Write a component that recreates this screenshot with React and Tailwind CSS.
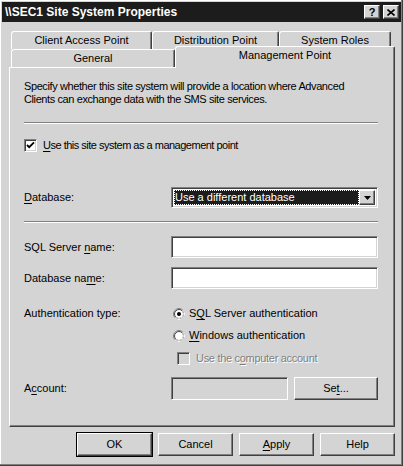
import React from 'react';

const raised =
  'border border-t-white border-l-white border-r-[#404040] border-b-[#404040] shadow-[inset_-1px_-1px_0_#808080]';
const sunken =
  'border border-t-[#808080] border-l-[#808080] border-r-white border-b-white shadow-[inset_1px_1px_0_#404040,inset_-1px_-1px_0_#d4d4d4]';

const U = ({ children }) => <span className="underline underline-offset-2">{children}</span>;

const Separator = ({ className = '' }) => (
  <div className={`h-[2px] border-t border-t-[#808080] border-b border-b-white ${className}`} />
);

const Checkbox = ({ checked, disabled }) => (
  <div className={`w-[13px] h-[13px] shrink-0 flex items-center justify-center ${sunken} ${disabled ? 'bg-[#d4d4d4]' : 'bg-white'}`}>
    {checked && (
      <svg width="9" height="9" viewBox="0 0 9 9">
        <path d="M1 4 L3.2 6.2 L8 1.4" fill="none" stroke="#000" strokeWidth="1.8" />
      </svg>
    )}
  </div>
);

const Radio = ({ checked }) => (
  <svg width="12" height="12" viewBox="0 0 12 12" className="shrink-0">
    <circle cx="6" cy="6" r="5.5" fill="#fff" stroke="#808080" />
    <path d="M9.89 2.11 A5.5 5.5 0 0 1 2.11 9.89" fill="none" stroke="#fff" />
    <circle cx="6" cy="6" r="4.5" fill="none" stroke="#404040" />
    <path d="M9.18 2.82 A4.5 4.5 0 0 1 2.82 9.18" fill="none" stroke="#d4d4d4" />
    {checked && <circle cx="6" cy="6" r="2" fill="#000" />}
  </svg>
);

const Tab = ({ w, children, selected }) => (
  <div
    className={`${w} flex items-center justify-center border-t border-l border-t-white border-l-white border-r border-r-[#404040] shadow-[inset_-1px_0_0_#808080] rounded-tl-[3px] rounded-tr-[2px] bg-[#d4d4d4] ${
      selected ? 'relative z-10 -mt-[3px] h-[22px] pb-[4px]' : 'h-[18px]'
    }`}
  >
    {children}
  </div>
);

const Button = ({ children, def, className = 'w-[75px] h-[23px]' }) => (
  <div className={`${className} ${def ? 'outline outline-1 outline-black' : ''} flex`}>
    <div className={`flex-1 flex items-center justify-center ${raised}`}>{children}</div>
  </div>
);

const Row = ({ label, children, className = '' }) => (
  <div className={`flex items-center ${className}`}>
    <div className="w-[147px] shrink-0">{label}</div>
    {children}
  </div>
);

export default function App() {
  return (
    <div
      className="w-[403px] h-[466px] bg-[#d4d4d4] p-[2px] flex flex-col text-[11px] leading-[13px] text-black shadow-[inset_-1px_-1px_0_#404040,inset_-2px_-2px_0_#808080,inset_1px_1px_0_#fff]"
      style={{ fontFamily: '"Liberation Sans", Arial, sans-serif' }}
    >
      {/* Title bar */}
      <div className="h-[20px] bg-[#1c1c1c] flex items-center pl-[3px] pr-[2px]">
        <span className="flex-1 text-white font-bold text-[12px]">\\SEC1 Site System Properties</span>
        <div className="flex gap-[3px]">
          <div className={`w-[16px] h-[14px] bg-[#d4d4d4] flex items-center justify-center font-bold text-[11px] ${raised}`}>?</div>
          <div className={`w-[16px] h-[14px] bg-[#d4d4d4] flex items-center justify-center ${raised}`}>
            <svg width="8" height="7" viewBox="0 0 8 7">
              <path d="M0.5 0.5 L7.5 6.5 M7.5 0.5 L0.5 6.5" stroke="#000" strokeWidth="1.6" />
            </svg>
          </div>
        </div>
      </div>

      {/* Tabs */}
      <div className="mt-[9px] ml-[9px] flex">
        <Tab w="w-[141px]">Client Access Point</Tab>
        <Tab w="w-[127px]">Distribution Point</Tab>
        <Tab w="w-[112px]">System Roles</Tab>
      </div>
      <div className="ml-[9px] flex">
        <Tab w="w-[164px]">General</Tab>
        <Tab w="w-[220px]" selected>
          Management Point
        </Tab>
      </div>

      {/* Panel */}
      <div className={`ml-[7px] w-[386px] h-[360px] -mt-[1px] pt-[12px] pl-[14px] pr-[16px] flex flex-col ${raised}`}>
        <p className="tracking-[-0.4px]">
          Specify whether this site system will provide a location where Advanced
          <br />
          Clients can exchange data with the SMS site services.
        </p>
        <Separator className="mt-[16px]" />

        <div className="mt-[15px] flex items-center gap-[6px]">
          <Checkbox checked />
          <span className="tracking-[-0.5px]">
            <U>U</U>se this site system as a management point
          </span>
        </div>

        <Row
          className="mt-[35px]"
          label={
            <span>
              <U>D</U>atabase:
            </span>
          }
        >
          <div className={`w-[208px] h-[21px] bg-white flex p-[2px] ${sunken}`}>
            <div className="flex-1 bg-[#1c1c1c] text-white flex items-center pl-[1px] outline outline-1 outline-dotted outline-white -outline-offset-1">
              Use a different database
            </div>
            <div className={`w-[16px] bg-[#d4d4d4] flex items-center justify-center ${raised}`}>
              <svg width="7" height="4" viewBox="0 0 7 4">
                <path d="M0 0 H7 L3.5 4 Z" fill="#000" />
              </svg>
            </div>
          </div>
        </Row>

        <Separator className="mt-[13px]" />

        <Row
          className="mt-[13px]"
          label={
            <span>
              SQL Server <U>n</U>ame:
            </span>
          }
        >
          <div className={`w-[208px] h-[22px] bg-white ${sunken}`} />
        </Row>

        <Row
          className="mt-[9px]"
          label={
            <span>
              Database na<U>m</U>e:
            </span>
          }
        >
          <div className={`w-[208px] h-[22px] bg-white ${sunken}`} />
        </Row>

        <Row className="mt-[18px]" label="Authentication type:">
          <div className="ml-[2px] flex items-center gap-[4px]">
            <Radio checked />
            <span>
              S<U>Q</U>L Server authentication
            </span>
          </div>
        </Row>

        <div className="mt-[9px] ml-[149px] flex items-center gap-[4px]">
          <Radio />
          <span>
            <U>W</U>indows authentication
          </span>
        </div>

        <div className="mt-[10px] ml-[153px] flex items-center gap-[6px] text-[#808080] [text-shadow:1px_1px_0_#fff]">
          <Checkbox disabled />
          <span className="tracking-[-0.3px]">
            Use the c<U>o</U>mputer account
          </span>
        </div>

        <Row
          className="mt-[12px]"
          label={
            <span>
              A<U>c</U>count:
            </span>
          }
        >
          <div className={`w-[118px] h-[23px] bg-[#d4d4d4] ${sunken}`} />
          <div className="ml-[6px]">
            <Button className="w-[84px] h-[23px]">
              Se<U>t</U>...
            </Button>
          </div>
        </Row>
      </div>

      {/* Dialog buttons */}
      <div className="mt-[6px] ml-[75px] flex gap-[6px]">
        <Button def>OK</Button>
        <Button>Cancel</Button>
        <Button>
          <U>A</U>pply
        </Button>
        <Button>Help</Button>
      </div>
    </div>
  );
}
